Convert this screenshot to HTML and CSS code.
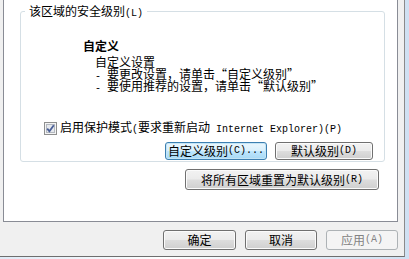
FILE: index.html
```html
<!DOCTYPE html>
<html lang="zh-CN">
<head>
<meta charset="utf-8">
<link rel="stylesheet" href="styles.css">
</head>
<body>
<div class="window">
  <div class="panel">
    <div class="group">
      <span class="legend">该区域的安全级别<span class="m">(L)</span></span>
      <div class="level">
        <div class="title">自定义</div>
        <div class="desc">
          <div class="line">自定义设置</div>
          <div class="line"><span class="m">- </span>要更改设置，请单击<span class="ql">“</span>自定义级别<span class="qr">”</span></div>
          <div class="line"><span class="m">- </span>要使用推荐的设置，请单击<span class="ql">“</span>默认级别<span class="qr">”</span></div>
        </div>
      </div>
      <div class="check">
        <svg class="box" width="13" height="13" viewBox="0 0 13 13">
          <rect x="0.5" y="0.5" width="12" height="12" fill="#f4f4f4" stroke="#8e8f8f"/>
          <rect x="2.5" y="2.5" width="8" height="8" fill="#e6e9ee" stroke="#b3b8bf"/>
          <path d="M3.2 6.6 L5.4 9.2 L9.8 3.2" fill="none" stroke="#4a5f97" stroke-width="1.8"/>
        </svg>
        <span>启用保护模式<span class="m">(</span>要求重新启动<span class="m"> Internet Explorer)(P)</span></span>
      </div>
      <div class="row">
        <button class="btn focus w102">自定义级别<span class="m">(C)...</span></button>
        <button class="btn w98">默认级别<span class="m">(D)</span></button>
      </div>
    </div>
    <div class="resetrow">
      <button class="btn reset">将所有区域重置为默认级别<span class="m">(R)</span></button>
    </div>
  </div>
  <div class="footer">
    <button class="btn w73">确定</button>
    <button class="btn w72">取消</button>
    <button class="btn w72 disabled">应用<span class="m">(A)</span></button>
  </div>
</div>
</body>
</html>
```
FILE: styles.css
```css
* { box-sizing: border-box; }
html, body {
  margin: 0;
  padding: 0;
}
body {
  width: 409px;
  height: 259px;
  overflow: hidden;
  background: linear-gradient(90deg, #dfeaf6, #ffffff 40%, #cfe0f2);
  font-family: "Noto Sans CJK SC", "Liberation Sans", sans-serif;
  font-size: 12px;
  line-height: 12px;
  color: #000;
}
.m {
  font-family: "Liberation Mono", "DejaVu Sans Mono", monospace;
  font-size: 10px;
}
.ql, .qr {
  display: inline-block;
  width: 12px;
}
.ql { text-align: right; }
.qr { text-align: left; }
.window {
  width: 405px;
  height: 257px;
  background: #f0f0f0;
  border-right: 1px solid #8a8a8a;
  border-bottom: 1px solid #6e6e6e;
  padding-left: 3px;
  display: flex;
  flex-direction: column;
}
.panel {
  margin-top: -1px;
  width: 395px;
  height: 223px;
  background: #fff;
  border: 1px solid #898c95;
  flex: none;
}
.group {
  position: relative;
  margin: 11px 0 0 16px;
  width: 365px;
  height: 151px;
  border: 1px solid #d5dfe5;
  border-radius: 3px;
  display: flex;
  flex-direction: column;
}
.legend {
  position: absolute;
  top: -7px;
  left: 4px;
  padding: 0 4px;
  background: #fff;
  white-space: nowrap;
}
.level {
  margin-top: 28px;
  padding-left: 62px;
}
.title {
  font-weight: bold;
}
.desc {
  margin-top: 4px;
  padding-left: 12px;
  white-space: nowrap;
}
.line { height: 12px; }
.check {
  margin-top: 30px;
  padding-left: 23px;
  display: flex;
  align-items: center;
  gap: 3px;
  white-space: nowrap;
  height: 13px;
}
.box { flex: none; display: block; }
.row {
  margin-top: 7px;
  padding-right: 11px;
  display: flex;
  justify-content: flex-end;
  gap: 8px;
}
.btn {
  font: inherit;
  color: #000;
  padding: 0;
  margin: 0;
  height: 18px;
  border: 1px solid #707070;
  border-radius: 3px;
  background: linear-gradient(#f2f2f2 0%, #ebebeb 48%, #dddddd 52%, #cfcfcf 100%);
  box-shadow: inset 0 0 0 1px #fbfbfb;
  white-space: nowrap;
  display: flex;
  align-items: center;
  justify-content: center;
}
.btn.focus {
  border-color: #3c7fb1;
  background: linear-gradient(#eaf6fd 0%, #d9f0fc 48%, #bee6fd 52%, #a7d9f5 100%);
  box-shadow: inset 0 0 0 1px #c4e5f6;
}
.btn.disabled {
  border-color: #adb2b5;
  background: #f4f4f4;
  box-shadow: none;
  color: #838383;
}
.w102 { width: 102px; }
.w98 { width: 98px; }
.w73 { width: 73px; }
.w72 { width: 72px; }
.resetrow {
  margin-top: 7px;
  padding-right: 18px;
  display: flex;
  justify-content: flex-end;
}
.btn.reset {
  width: 194px;
  height: 21px;
}
.footer {
  margin-top: 8px;
  padding-right: 6px;
  display: flex;
  justify-content: flex-end;
  gap: 9px;
}
.footer .btn { height: 20px; }
```
